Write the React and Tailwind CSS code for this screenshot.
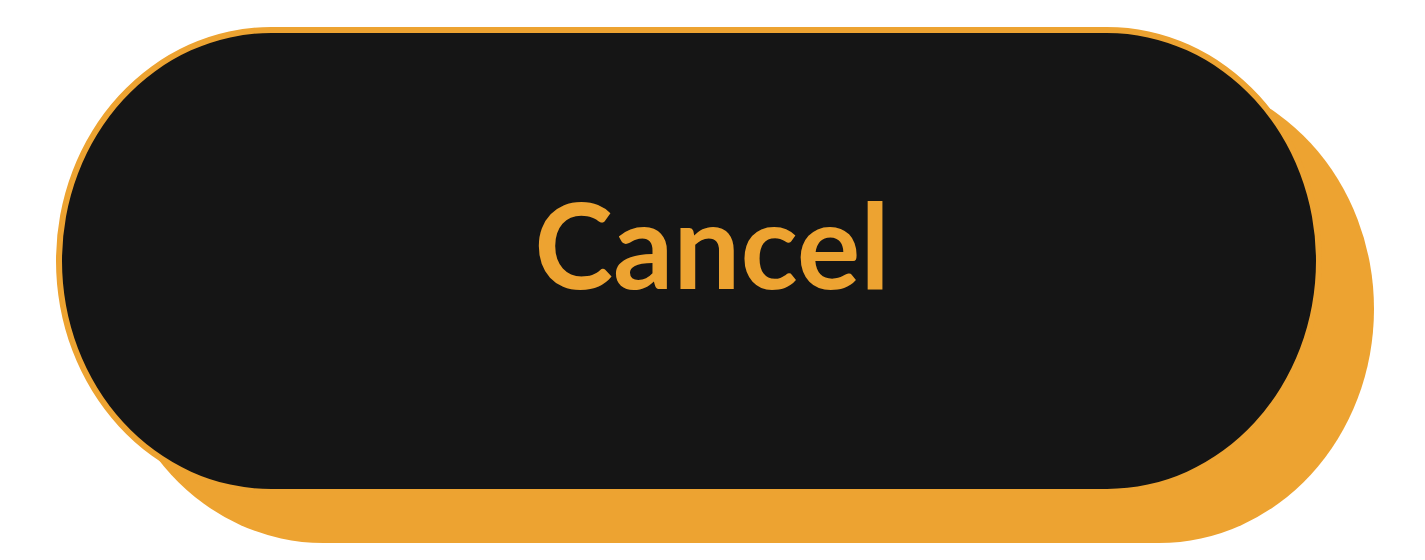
export default function App() {
  return (
    <div className="min-h-[560px] bg-white pl-[56px] pt-[27px]">
      <button
        type="button"
        className="flex h-[468px] w-[1266px] items-center justify-center rounded-[215px/234px] border-[6px] border-[#eda331] bg-[#151515] pb-[36px] pl-[46px] shadow-[52px_48px_0_0_#eda331]"
      >
        <span className="font-['Lato',sans-serif] text-[119px] font-bold leading-none text-[#eda331]">
          Cancel
        </span>
      </button>
    </div>
  );
}
